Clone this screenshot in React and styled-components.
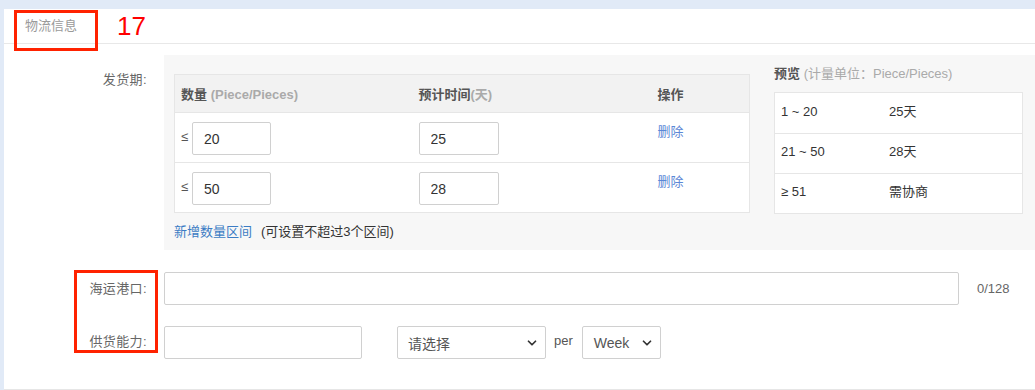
import React from "react";
import styled, { createGlobalStyle } from "styled-components";
import { ChevronDown } from "lucide-react";

const GlobalStyle = createGlobalStyle`
  html, body {
    margin: 0;
    padding: 0;
    background: #e1eaf7;
    font-family: "Liberation Sans", "Noto Sans CJK SC", sans-serif;
    font-size: 13px;
    color: #333;
  }
  * { box-sizing: border-box; }
`;

const Card = styled.div`
  position: relative;
  margin: 9px 0 0 4px;
  background: #fff;
  border-bottom: 1px solid #e6e6e6;
`;

const CardHeader = styled.div`
  height: 35px;
  line-height: 34px;
  padding-left: 21px;
  font-size: 13px;
  color: #9a9a9a;
  border-bottom: 1px solid #e8e8e8;
`;

const Annotation = styled.div`
  position: absolute;
  left: ${(p) => p.$left}px;
  top: ${(p) => p.$top}px;
  width: ${(p) => p.$w}px;
  height: ${(p) => p.$h}px;
  border: 3px solid #ff2200;
  pointer-events: none;
`;

const AnnotationNumber = styled.div`
  position: absolute;
  left: 113px;
  top: 4px;
  font-family: "Liberation Sans", Arial, sans-serif;
  font-size: 26px;
  line-height: 26px;
  color: #ff0000;
`;

const FormBody = styled.div`
  padding: 11px 0 30px;
  display: flex;
  flex-direction: column;
`;

const FormRow = styled.div`
  display: grid;
  grid-template-columns: 160px 1fr;
  margin-top: ${(p) => p.$mt || 0}px;
`;

const Label = styled.div`
  text-align: right;
  padding-right: 17px;
  padding-top: ${(p) => p.$pt || 0}px;
  line-height: ${(p) => p.$lh || 20}px;
  font-size: 13px;
  letter-spacing: 0.4px;
  color: #666;
  white-space: nowrap;
`;

const DeliveryPanel = styled.div`
  background: #f7f7f7;
  display: flex;
  gap: 24px;
  padding: 10px 12px 9px 10px;
`;

const LeftColumn = styled.div`
  width: 576px;
  padding-top: 9px;
`;

const Table = styled.table`
  width: 576px;
  border-collapse: collapse;
  border: 1px solid #e6e6e6;
  background: #fff;
  table-layout: fixed;
`;

const Th = styled.th`
  height: 38px;
  padding: 0 6px;
  text-align: left;
  font-weight: bold;
  font-size: 13px;
  color: #555;
  background: #f2f2f2;
  width: ${(p) => p.$w}px;
`;

const Muted = styled.span`
  color: #aaa;
  font-weight: ${(p) => (p.$bold ? "bold" : "normal")};
`;

const Td = styled.td`
  border-top: 1px solid #e6e6e6;
  padding: 9px 6px 7px;
  vertical-align: top;
`;

const RangeCell = styled.div`
  display: flex;
  align-items: center;
  gap: 3px;
  color: #555;
  font-size: 13px;
`;

const LeSign = styled.span`
  width: 8px;
  margin-top: -5px;
`;

const TextInput = styled.input`
  width: ${(p) => p.$w}px;
  height: 33px;
  border: 1px solid #d0d0d0;
  border-radius: 2px;
  padding: 0 11px;
  font-family: inherit;
  font-size: 14px;
  color: #333;
  background: #fff;
  outline: none;
`;

const DeleteLink = styled.a`
  display: block;
  line-height: 20px;
  color: #5b87d6;
  font-size: 13px;
  text-decoration: none;
  cursor: pointer;
`;

const AddLine = styled.div`
  margin-top: 10px;
  line-height: 18px;
  font-size: 13px;
  color: #333;
  display: flex;
  gap: 9px;
`;

const AddLink = styled.a`
  color: #3b7cc4;
  text-decoration: none;
  cursor: pointer;
`;

const PreviewColumn = styled.div`
  width: 249px;
`;

const PreviewTitle = styled.div`
  line-height: 18px;
  font-size: 13px;
  color: #555;
  font-weight: bold;
  margin-bottom: 9px;
`;

const PreviewTable = styled.div`
  border: 1px solid #e6e6e6;
  background: #fff;
`;

const PreviewRow = styled.div`
  display: grid;
  grid-template-columns: 108px 1fr;
  height: 40px;
  align-items: center;
  padding: 0 6px 3px;
  font-size: 13px;
  line-height: 18px;
  color: #333;
  border-top: ${(p) => (p.$first ? "none" : "1px solid #e6e6e6")};
`;

const InlineGroup = styled.div`
  display: flex;
  align-items: center;
`;

const Counter = styled.span`
  margin-left: 18px;
  font-size: 13px;
  color: #666;
`;

const SelectBox = styled.div`
  width: ${(p) => p.$w}px;
  height: 33px;
  margin-left: ${(p) => p.$ml || 0}px;
  border: 1px solid #d0d0d0;
  border-radius: 2px;
  background: #fff;
  display: flex;
  align-items: center;
  justify-content: space-between;
  padding: 0 6px 0 ${(p) => p.$pl || 10}px;
  font-size: 14px;
  color: #555;
  cursor: pointer;
`;

const Per = styled.span`
  margin: -4px 9px 0 8px;
  font-size: 13px;
  color: #555;
`;

const rows = [
  { qty: "20", days: "25" },
  { qty: "50", days: "28" },
];

const preview = [
  ["1 ~ 20", "25天"],
  ["21 ~ 50", "28天"],
  ["≥ 51", "需协商"],
];

export default function App() {
  return (
    <>
      <GlobalStyle />
      <Card>
        <CardHeader>物流信息</CardHeader>
        <FormBody>
          <FormRow>
            <Label $pt={15}>发货期:</Label>
            <DeliveryPanel>
              <LeftColumn>
                <Table>
                  <thead>
                    <tr>
                      <Th $w={238}>
                        数量 <Muted $bold>(Piece/Pieces)</Muted>
                      </Th>
                      <Th $w={239}>
                        预计时间<Muted $bold>(天)</Muted>
                      </Th>
                      <Th>操作</Th>
                    </tr>
                  </thead>
                  <tbody>
                    {rows.map((r, i) => (
                      <tr key={i}>
                        <Td>
                          <RangeCell>
                            <LeSign>≤</LeSign>
                            <TextInput $w={79} defaultValue={r.qty} />
                          </RangeCell>
                        </Td>
                        <Td>
                          <TextInput $w={80} defaultValue={r.days} />
                        </Td>
                        <Td>
                          <DeleteLink>删除</DeleteLink>
                        </Td>
                      </tr>
                    ))}
                  </tbody>
                </Table>
                <AddLine>
                  <AddLink>新增数量区间</AddLink>
                  <span>(可设置不超过3个区间)</span>
                </AddLine>
              </LeftColumn>
              <PreviewColumn>
                <PreviewTitle>
                  预览 <Muted>(计量单位：Piece/Pieces)</Muted>
                </PreviewTitle>
                <PreviewTable>
                  {preview.map(([a, b], i) => (
                    <PreviewRow key={i} $first={i === 0}>
                      <span>{a}</span>
                      <span>{b}</span>
                    </PreviewRow>
                  ))}
                </PreviewTable>
              </PreviewColumn>
            </DeliveryPanel>
          </FormRow>

          <FormRow $mt={21}>
            <Label $lh={35}>海运港口:</Label>
            <InlineGroup>
              <TextInput $w={795} />
              <Counter>0/128</Counter>
            </InlineGroup>
          </FormRow>

          <FormRow $mt={20}>
            <Label $lh={31}>供货能力:</Label>
            <InlineGroup>
              <TextInput $w={198} />
              <SelectBox $w={149} $ml={35}>
                <span>请选择</span>
                <ChevronDown size={14} strokeWidth={3} color="#333" />
              </SelectBox>
              <Per>per</Per>
              <SelectBox $w={79} $pl={11}>
                <span>Week</span>
                <ChevronDown size={14} strokeWidth={3} color="#333" />
              </SelectBox>
            </InlineGroup>
          </FormRow>
        </FormBody>

        <Annotation $left={10} $top={1} $w={84} $h={41} />
        <AnnotationNumber>17</AnnotationNumber>
        <Annotation $left={70} $top={261} $w={84} $h={83} />
      </Card>
    </>
  );
}
